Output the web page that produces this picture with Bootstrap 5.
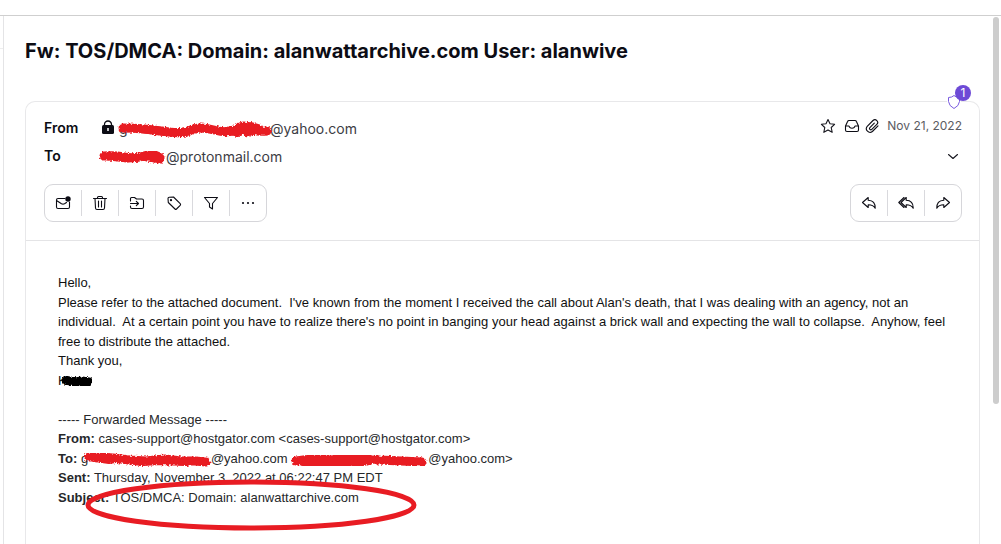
<!DOCTYPE html>
<html lang="en">
<head>
<meta charset="utf-8">
<meta name="viewport" content="width=device-width, initial-scale=1">
<title>Fw: TOS/DMCA: Domain: alanwattarchive.com User: alanwive</title>
<link href="https://cdn.jsdelivr.net/npm/bootstrap@5.3.0/dist/css/bootstrap.min.css" rel="stylesheet">
<style>
  body { font-family: Inter, "Liberation Sans", sans-serif; font-size: 14px; line-height: 20px; color: #0c0c14; background: #fff; }
  .topbar { height: 16px; border-bottom: 1px solid #cfcfcf; }
  .side { width: 4px; border-right: 1px solid #e4e4e6; }
  .side hr { margin: 32px 0 0; color: #bbb; }
  .pane { padding: 20px 13px 0 21px; }
  .subject { font-size: 20px; line-height: 30px; font-weight: 650; margin-bottom: 35px; }
  .message { border: 1px solid #e8e8ea; border-bottom: 0; border-radius: 10px 10px 0 0; }
  .message-head { padding: 16px 17px 18px 18px; border-bottom: 1px solid #e4e4e6; }
  .people { display: grid; grid-template-columns: 55px auto; row-gap: 8px; }
  .people dt { font-weight: 600; }
  .people dd { color: #3c3c44; margin: 0; padding-top: 1px; height: 20px; white-space: nowrap; }
  .meta { line-height: 16px; }
  .date { font-size: 12px; color: #5c5c62; margin-left: 7px; }
  .plain { border: 0; background: none; padding: 0; color: #16161e; display: block; }
  .plain svg, .tools svg { display: block; }
  svg.ico { width: 16px; height: 16px; fill: none; stroke: currentColor; stroke-width: 1.1; stroke-linejoin: round; stroke-linecap: round; }
  .actions { margin-top: 18px; }
  .tools { border: 1px solid #d6d6da; border-radius: 9px; height: 38px; padding: 5px 0; }
  .tools button { width: 37px; border: 0; border-left: 1px solid #d9d9dd; background: none; padding: 0 0 0 10px; color: #0c0c14; }
  .tools button:first-child { width: 36px; border-left: 0; }
  .shield { position: absolute; right: 8px; top: -17px; width: 24px; height: 26px; background: none; border: 0; padding: 0; }
  .shield svg { position: absolute; left: 0; top: 9px; background: #fff; }
  .shield span { position: absolute; right: 0; top: 0; width: 16px; height: 16px; border-radius: 50%; background: #6d4ad6; color: #fff; font-size: 12px; line-height: 16px; }
  .mail { font-family: "Liberation Sans", Arial, sans-serif; font-size: 13px; line-height: 1.5; color: #111; padding: 32px 32px 0; }
  .forwarded { color: #26282a; }
  .mark-out { position: relative; display: inline-block; white-space: nowrap; vertical-align: top; }
  .mark-out svg { position: absolute; left: 0; top: 0; overflow: visible; }
  .w-from { width: 151px; } .w-to { width: 67px; } .w-name { width: 34px; } .w-first { width: 130px; } .w-second { width: 137px; }
  .red { fill: none; stroke: #e81c23; stroke-linecap: round; stroke-linejoin: round; filter: url(#rough); }
  .circled { position: relative; }
  .circled svg { position: absolute; left: 26px; top: -11px; overflow: visible; }
  .rail { width: 8px; padding-top: 1px; }
  .thumb { width: 6px; height: 73.5%; border-radius: 3px; background: #cdcdcd; }
</style>
</head>
<body class="vh-100 overflow-hidden d-flex flex-column">
<svg width="0" height="0" class="position-absolute" aria-hidden="true"><filter id="rough" x="-10%" y="-60%" width="120%" height="220%"><feTurbulence type="fractalNoise" baseFrequency=".6" numOctaves="2" seed="4"/><feDisplacementMap in="SourceGraphic" scale="4" xChannelSelector="R" yChannelSelector="G"/></filter></svg>
<header class="topbar flex-shrink-0"></header>
<div class="d-flex flex-grow-1 overflow-hidden">
  <aside class="side flex-shrink-0"><hr></aside>
  <main class="pane flex-grow-1 d-flex flex-column">
    <h1 class="subject">Fw: TOS/DMCA: Domain: alanwattarchive.com User: alanwive</h1>
    <article class="message position-relative flex-grow-1">
      <button class="shield" aria-label="1 tracker blocked">
        <svg width="14" height="16" viewBox="0 0 14 16" fill="none" stroke="#7a5be0"><path d="M1.500 3.500 Q5 3.500 7 1.500 Q9 3.500 12.500 3.500 V7.500 Q12 12 7 14.500 Q2 12 1.500 7.500Z"/></svg>
        <span>1</span>
      </button>
      <div class="message-head">
        <div class="d-flex justify-content-between">
          <dl class="people mb-0">
            <dt>From</dt>
            <dd class="d-flex"><svg width="20" height="20" viewBox="0 0 20 20" aria-label="Encrypted"><path d="M5.500 8 V5.500 a3.500 3.500 0 0 1 7 0 V8" fill="none" stroke="#0c0c14" stroke-width="1.300"/><rect x="3" y="6" width="12" height="9" rx="1.500" fill="#0c0c14"/><path d="M9 9v3" stroke="#fff" stroke-width="1.500"/></svg><span class="mark-out w-from">g<svg width="152" height="20"><g class="red"><path stroke-width="9" d="M4 9 Q15 9 25 10 T50 13 T72 11 T95 11 T118 10 T130 9 T148 12"/><path stroke-width="8" d="M22 10 L45 13 L62 13 L78 10 M112 11 L118 14 L126 8 L132 7 L139 9 L128 14"/></g></svg></span><span>@yahoo.com</span></dd>
            <dt>To</dt>
            <dd class="d-flex"><span class="mark-out w-to">&nbsp;<svg width="66" height="20"><g class="red"><path stroke-width="9" d="M5 9 Q15 8 25 10 T45 9 T61 11"/><path stroke-width="7" d="M10 10 L28 12 L43 10 L61 13"/></g></svg></span><span>@protonmail.com</span></dd>
          </dl>
          <div class="meta">
            <div class="d-flex align-items-center">
              <button class="plain me-2" aria-label="Star"><svg class="ico" viewBox="0 0 16 16"><path d="M8 1.500 L10 5.800 L14.600 6.300 L11.200 9.500 L12.200 14.300 L8 11.900 L3.800 14.300 L4.800 9.500 L1.400 6.300 L6 5.800Z"/></svg></button>
              <svg class="ico me-1" viewBox="0 0 16 16" aria-label="Inbox"><path d="M1.500 8 L3.700 3.300 Q4 2.500 5 2.500 H11 Q12 2.500 12.300 3.300 L14.500 8 V12 Q14.500 13.500 13 13.500 H3 Q1.500 13.500 1.500 12Z M1.500 8 H5 Q5.500 10.200 8 10.200 T11 8 H14.500"/></svg>
              <svg class="ico" viewBox="0 0 16 16" aria-label="Has attachment"><path d="M10.300 5.200 L5.900 9.600 A1.300 1.300 0 0 0 7.800 11.400 L12.800 6.400 A2.700 2.700 0 0 0 9 2.500 L3.200 8.300 A3.700 3.700 0 0 0 8.400 13.500 L14 7.900"/></svg>
              <time class="date" datetime="2022-11-21">Nov 21, 2022</time>
            </div>
            <button class="plain ms-auto mt-3" aria-label="Show details"><svg class="ico" viewBox="0 0 16 16"><path d="M2.500 4.500 L7 8.500 L11.500 4.500"/></svg></button>
          </div>
        </div>
        <div class="actions d-flex justify-content-between">
          <div class="tools d-flex" role="toolbar" aria-label="Message actions">
            <button aria-label="Mark as unread"><svg class="ico" viewBox="0 0 16 16"><path d="M10 3.500 H3 Q1.500 3.500 1.500 5 V12 Q1.500 13.500 3 13.500 H13 Q14.500 13.500 14.500 12 V7 M1.500 5.500 L6.500 8.800 Q8 9.500 9.500 8.800 L11.500 7.500"/><circle cx="13" cy="4" r="2.700" fill="currentColor" stroke="none"/></svg></button>
            <button aria-label="Move to trash"><svg class="ico" viewBox="0 0 16 16"><path d="M1.500 3.500 H14.500 M5.500 3.300 V2.500 Q5.500 1.500 6.500 1.500 H9.500 Q10.500 1.500 10.500 2.500 V3.300 M3 3.500 L3.500 13 Q3.600 14.500 5 14.500 H11 Q12.400 14.500 12.500 13 L13 3.500 M6.500 6 V12 M9.500 6 V12"/></svg></button>
            <button aria-label="Move to folder"><svg class="ico" viewBox="0 0 16 16"><path d="M1.500 6 V3.500 Q1.500 2.500 2.500 2.500 H5.500 L7.500 4 H13 Q14.500 4 14.500 5.500 V12 Q14.500 13.500 13 13.500 H3 Q1.500 13.500 1.500 12 V11 M1.500 8.500 H9.500 M7.300 6.300 L9.500 8.500 L7.300 10.700"/></svg></button>
            <button aria-label="Label as"><svg class="ico" viewBox="0 0 16 16"><path d="M2 3.500 Q2 2.300 3.200 2.200 L7.500 2 L14.200 8.600 Q15 9.500 14.200 10.300 L10.500 14 Q9.700 14.700 9 14 L2.300 7.500Z"/><circle cx="5" cy="5.200" r=".6"/></svg></button>
            <button aria-label="Filter on"><svg class="ico" viewBox="0 0 16 16"><path d="M1.500 2.500 H14.500 L9.500 8.500 V14 L6.500 12 V8.500Z"/></svg></button>
            <button aria-label="More"><svg class="ico" viewBox="0 0 16 16"><g fill="currentColor" stroke="none"><circle cx="3" cy="8" r="1.100"/><circle cx="8" cy="8" r="1.100"/><circle cx="13" cy="8" r="1.100"/></g></svg></button>
          </div>
          <div class="tools d-flex" role="toolbar" aria-label="Reply actions">
            <button aria-label="Reply"><svg class="ico" viewBox="0 0 16 16"><path d="M1.500 7.500 L7.200 2.500 V5.200 Q14.500 5.500 14.200 13.300 Q12 9.700 7.200 9.800 V12.500Z"/></svg></button>
            <button aria-label="Reply all"><svg class="ico" viewBox="0 0 16 16"><path d="M3 7.500 L8.200 2.500 V5.200 Q15.500 5.500 15.200 13.300 Q13 9.700 8.200 9.800 V12.500Z M6 2.500 L.8 7.500 L6 12.500"/></svg></button>
            <button aria-label="Forward"><svg class="ico" viewBox="0 0 16 16"><path d="M14.500 7.500 L8.800 2.500 V5.200 Q1.500 5.500 1.800 13.300 Q4 9.700 8.800 9.800 V12.500Z"/></svg></button>
          </div>
        </div>
      </div>
      <div class="mail">
        <div>Hello,</div>
        <div>Please refer to the attached document.&nbsp; I've known from the moment I received the call about Alan's death, that I was dealing with an agency, not an individual.&nbsp; At a certain point you have to realize there's no point in banging your head against a brick wall and expecting the wall to collapse.&nbsp; Anyhow, feel free to distribute the attached.</div>
        <div>Thank you,</div>
        <div><span class="mark-out w-name">K<svg width="34" height="20"><path d="M8 8 L16 10 L24 9 L31 10 M7 10 L18 12 L30 12" fill="none" stroke="#000" stroke-width="7" stroke-linecap="round" stroke-linejoin="round" filter="url(#rough)"/></svg></span></div>
        <br>
        <div class="forwarded">
          <div>----- Forwarded Message -----</div>
          <div><b>From:</b> cases-support@hostgator.com &lt;cases-support@hostgator.com&gt;</div>
          <div><b>To:</b> <span class="mark-out w-first">g<svg width="130" height="20"><g class="red"><path stroke-width="9" d="M8 8 L18 8 L32 9 L48 11 L65 12 L84 10 L100 12 L114 12 L125 13"/><path stroke-width="6" d="M14 10 L28 12 L40 10 L60 14 L80 13 L105 14"/></g></svg></span>@yahoo.com <span class="mark-out w-second">&nbsp;<svg width="137" height="20"><g class="red"><path stroke-width="9" d="M5 12 L20 10 L38 10 L58 9 L75 9 L88 11 L110 12 L131 13"/><path stroke-width="8" d="M12 13 L30 14 L46 13 L65 14 L78 12"/></g></svg></span>@yahoo.com&gt;</div>
          <div><b>Sent:</b> Thursday, November 3, 2022 at 06:22:47 PM EDT</div>
          <div class="circled"><b>Subject:</b> TOS/DMCA: Domain: alanwattarchive.com<svg width="334" height="54" aria-hidden="true"><ellipse cx="167" cy="28" rx="163" ry="23" fill="none" stroke="#e81c23" stroke-width="5"/></svg></div>
        </div>
      </div>
    </article>
  </main>
  <div class="rail flex-shrink-0"><div class="thumb"></div></div>
</div>
<script src="https://cdn.jsdelivr.net/npm/bootstrap@5.3.0/dist/js/bootstrap.bundle.min.js"></script>
</body>
</html>
